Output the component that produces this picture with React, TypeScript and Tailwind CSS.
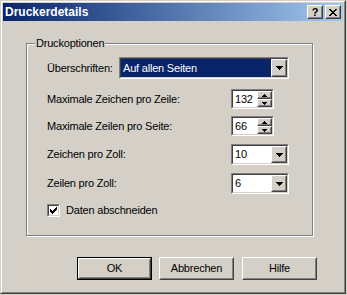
import React from 'react'

type BoxProps = { className?: string; children?: React.ReactNode }

const Raised = ({ className = '', children }: BoxProps) => (
  <div className={`border border-t-white border-l-white border-r-[#404040] border-b-[#404040] ${className}`}>
    <div className="flex h-full w-full items-center justify-center border border-t-[#d4d0c8] border-l-[#d4d0c8] border-r-[#808080] border-b-[#808080] bg-[#d4d0c8]">
      {children}
    </div>
  </div>
)

const Sunken = ({ className = '', children }: BoxProps) => (
  <div className={`border border-t-[#808080] border-l-[#808080] border-r-white border-b-white ${className}`}>
    <div className="flex h-full w-full border border-t-[#404040] border-l-[#404040] border-r-[#d4d0c8] border-b-[#d4d0c8] bg-white">
      {children}
    </div>
  </div>
)

const DownArrow = () => (
  <svg width="7" height="4" viewBox="0 0 7 4" shapeRendering="crispEdges">
    <rect x="0" y="0" width="7" height="1" fill="#000" />
    <rect x="1" y="1" width="5" height="1" fill="#000" />
    <rect x="2" y="2" width="3" height="1" fill="#000" />
    <rect x="3" y="3" width="1" height="1" fill="#000" />
  </svg>
)

const SmallArrow = ({ up }: { up?: boolean }) => (
  <svg width="5" height="3" viewBox="0 0 5 3" shapeRendering="crispEdges">
    {up ? (
      <>
        <rect x="2" y="0" width="1" height="1" fill="#000" />
        <rect x="1" y="1" width="3" height="1" fill="#000" />
        <rect x="0" y="2" width="5" height="1" fill="#000" />
      </>
    ) : (
      <>
        <rect x="0" y="0" width="5" height="1" fill="#000" />
        <rect x="1" y="1" width="3" height="1" fill="#000" />
        <rect x="2" y="2" width="1" height="1" fill="#000" />
      </>
    )}
  </svg>
)

const Combo = ({ value, className = '', selected }: { value: string; className?: string; selected?: boolean }) => (
  <Sunken className={className}>
    <div className={`flex flex-1 items-center pl-[2px] ${selected ? 'bg-[#0a246a] text-white' : 'text-black'}`}>
      {value}
    </div>
    <Raised className="h-full w-[16px]">
      <DownArrow />
    </Raised>
  </Sunken>
)

const Spin = ({ value }: { value: string }) => (
  <Sunken className="h-[20px] w-[43px]">
    <div className="flex flex-1 items-center pl-[2px] text-black">{value}</div>
    <div className="flex w-[15px] flex-col">
      <Raised className="h-1/2 w-full">
        <SmallArrow up />
      </Raised>
      <Raised className="h-1/2 w-full">
        <SmallArrow />
      </Raised>
    </div>
  </Sunken>
)

const Check = () => (
  <svg width="7" height="7" viewBox="0 0 7 7" shapeRendering="crispEdges">
    <path
      fill="#000"
      d="M6 0h1v3h-1zM5 1h1v3h-1zM4 2h1v3h-1zM3 3h1v3h-1zM2 4h1v3h-1zM1 3h1v3h-1zM0 2h1v3h-1z"
    />
  </svg>
)

const Button = ({ label, isDefault }: { label: string; isDefault?: boolean }) =>
  isDefault ? (
    <div className="h-[23px] w-[75px] border border-black">
      <Raised className="h-full w-full">{label}</Raised>
    </div>
  ) : (
    <Raised className="h-[23px] w-[75px]">{label}</Raised>
  )

const App = () => {
  return (
    <div
      className="h-[295px] w-[347px] bg-[#d4d0c8] text-[11px] tracking-[-0.2px] text-black"
      style={{ fontFamily: '"Liberation Sans", Arial, sans-serif' }}
    >
      <div className="h-[294px] w-[346px] border border-t-[#d4d0c8] border-l-[#d4d0c8] border-r-[#404040] border-b-[#404040]">
        <div className="flex h-full w-full flex-col border border-t-white border-l-white border-r-[#808080] border-b-[#808080] p-[1px]">
          {/* title bar */}
          <div className="flex h-[18px] items-center bg-gradient-to-r from-[#0a246a] to-[#a6caf0] pl-[2px] pr-[2px]">
            <span className="flex-1 text-[12px] font-bold tracking-normal text-white">Druckerdetails</span>
            <Raised className="h-[14px] w-[16px]">
              <span className="text-[11px] font-bold leading-none">?</span>
            </Raised>
            <Raised className="ml-[2px] h-[14px] w-[16px]">
              <svg width="8" height="7" viewBox="0 0 8 7" shapeRendering="crispEdges">
                <path fill="#000" d="M0 0h2v1h-2zM6 0h2v1h-2zM1 1h2v1h-2zM5 1h2v1h-2zM2 2h4v1h-4zM3 3h2v1h-2zM2 4h4v1h-4zM1 5h2v1h-2zM5 5h2v1h-2zM0 6h2v1h-2zM6 6h2v1h-2z" />
              </svg>
            </Raised>
          </div>

          {/* body */}
          <div className="flex flex-1 flex-col pl-[23px] pt-[22px]">
            <div className="relative h-[193px] w-[287px] border border-[#808080] shadow-[1px_1px_0_#fff,inset_1px_1px_0_#fff]">
              <span className="absolute -top-[8px] left-[8px] bg-[#d4d0c8] px-[1px] leading-[14px]">Druckoptionen</span>

              <div className="flex flex-col pl-[20px] pt-[13px]">
                <div className="flex h-[22px] items-center">
                  <span className="w-[72px]">Überschriften:</span>
                  <Combo value="Auf allen Seiten" className="h-[22px] w-[170px]" selected />
                </div>

                <div className="mt-[10px] flex h-[20px] items-center">
                  <span className="w-[184px]">Maximale Zeichen pro Zeile:</span>
                  <Spin value="132" />
                </div>

                <div className="mt-[7px] flex h-[20px] items-center">
                  <span className="w-[184px]">Maximale Zeilen pro Seite:</span>
                  <Spin value="66" />
                </div>

                <div className="mt-[8px] flex h-[21px] items-center">
                  <span className="w-[184px]">Zeichen pro Zoll:</span>
                  <Combo value="10" className="h-[21px] w-[58px]" />
                </div>

                <div className="mt-[8px] flex h-[21px] items-center">
                  <span className="w-[184px]">Zeilen pro Zoll:</span>
                  <Combo value="6" className="h-[21px] w-[58px]" />
                </div>

                <div className="mt-[10px] flex h-[13px] items-center">
                  <Sunken className="h-[13px] w-[13px]">
                    <div className="flex flex-1 items-center justify-center">
                      <Check />
                    </div>
                  </Sunken>
                  <span className="ml-[6px]">Daten abschneiden</span>
                </div>
              </div>
            </div>

            <div className="ml-[51px] mt-[21px] flex">
              <Button label="OK" isDefault />
              <div className="ml-[7px]">
                <Button label="Abbrechen" />
              </div>
              <div className="ml-[8px]">
                <Button label="Hilfe" />
              </div>
            </div>
          </div>
        </div>
      </div>
    </div>
  )
}

export default App
